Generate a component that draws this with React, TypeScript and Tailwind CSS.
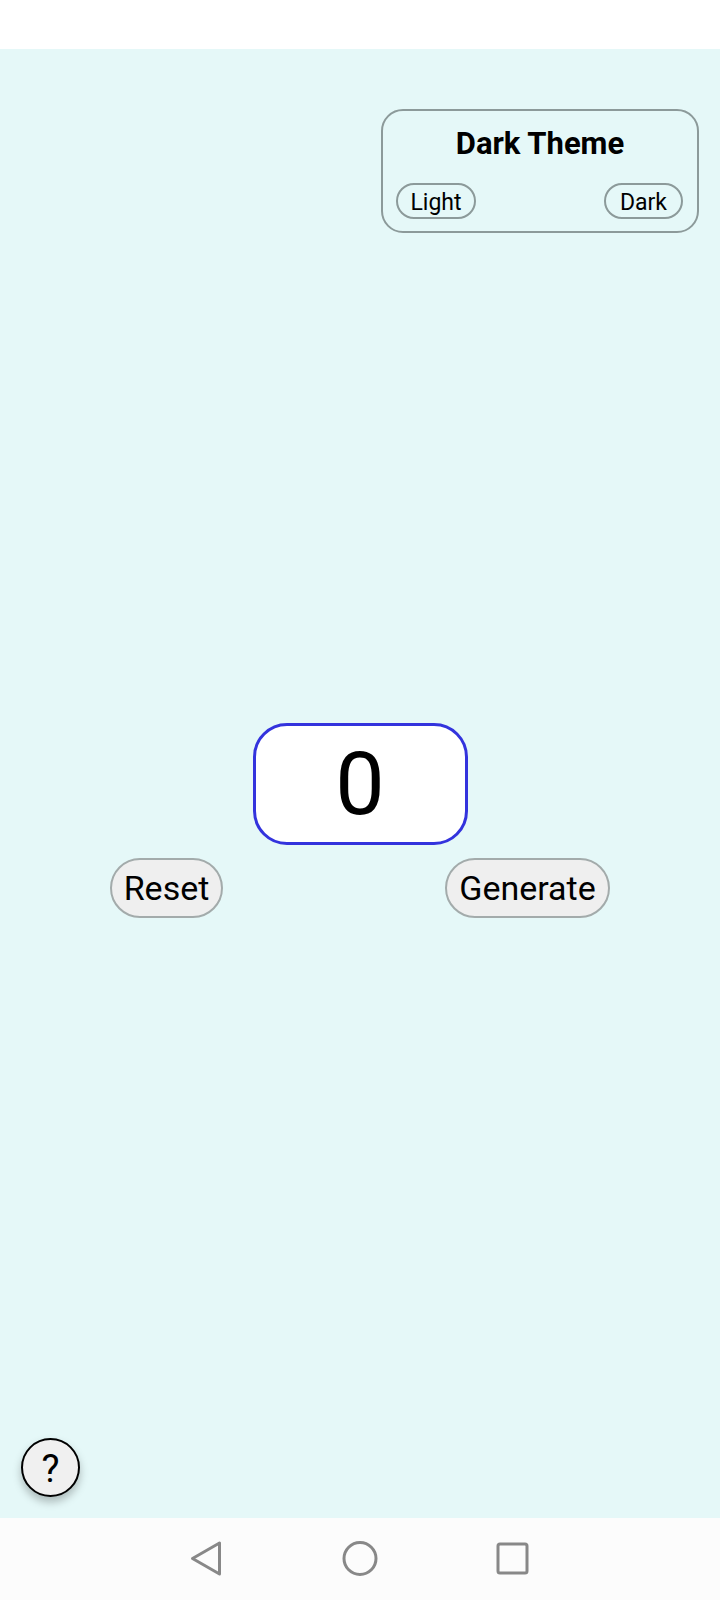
import React from "react";

export default function App() {
  return (
    <div className="w-[720px] h-[1600px] flex flex-col bg-white" style={{ fontFamily: "Roboto, 'Noto Sans', sans-serif" }}>
      <div className="h-[49px] bg-white shrink-0" />
      <div className="relative flex-1 bg-[#e5f8f8] flex flex-col">
        <div className="self-end mt-[60px] mr-[21px] w-[318px] h-[124px] rounded-[22px] border-2 border-[#8c9a9a] flex flex-col items-center pt-[15px] px-[13px]">
          <div className="text-[31px] leading-[36px] font-bold text-black">Dark Theme</div>
          <div className="mt-[21px] w-full flex justify-between pr-[1px]">
            <button className="w-[80px] h-[36px] rounded-full border-2 border-[#8c9a9a] text-[23px] leading-none text-black flex items-center justify-center pt-[2px]">Light</button>
            <button className="w-[79px] h-[36px] rounded-full border-2 border-[#8c9a9a] text-[23px] leading-none text-black flex items-center justify-center pt-[2px]">Dark</button>
          </div>
        </div>
        <div className="self-center mt-[490px] w-[215px] h-[122px] rounded-[34px] border-[3px] border-[#3333dd] bg-white flex items-center justify-center">
          <span className="text-[88px] leading-none text-black">0</span>
        </div>
        <div className="mt-[13px] px-[110px] flex justify-between">
          <button className="w-[113px] h-[60px] rounded-[30px] border-2 border-[#a3abab] bg-[#efefef] text-[34px] leading-none text-black flex items-center justify-center">Reset</button>
          <button className="w-[165px] h-[60px] rounded-[30px] border-2 border-[#a3abab] bg-[#efefef] text-[34px] leading-none text-black flex items-center justify-center">Generate</button>
        </div>
        <button className="absolute left-[21px] bottom-[21px] w-[59px] h-[59px] rounded-full border-2 border-black bg-[#f0f0f0] text-[38px] leading-none text-black flex items-center justify-center pt-[2px] shadow-[0_5px_8px_rgba(0,0,0,0.25)]">?</button>
      </div>
      <div className="h-[82px] shrink-0 bg-[#fcfcfc] flex items-center justify-center">
        <svg width="720" height="82" viewBox="0 0 720 82">
          <path d="M192.5 40.5 L219.5 25 L219.5 56 Z" fill="none" stroke="#888888" strokeWidth="3" strokeLinejoin="round" />
          <circle cx="360" cy="40.5" r="16" fill="none" stroke="#888888" strokeWidth="3" />
          <rect x="498" y="26" width="29" height="29" rx="2" fill="none" stroke="#888888" strokeWidth="3" />
        </svg>
      </div>
    </div>
  );
}
